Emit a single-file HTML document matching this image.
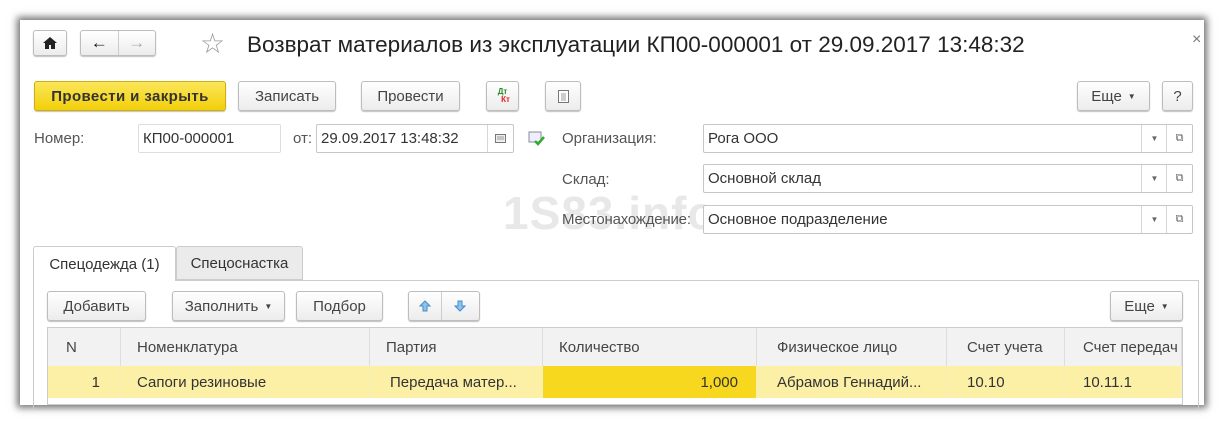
<!DOCTYPE html>
<html><head><meta charset="utf-8"><style>
body{margin:0;width:1224px;height:425px;background:#fff;position:relative;overflow:hidden;font-family:"Liberation Sans",Arial,sans-serif;font-size:15px;color:#333}
.win{position:absolute;left:20px;top:20px;width:1184px;height:385px;background:#fff;box-shadow:0 0 7px 3px rgba(0,0,0,.55)}
.a{position:absolute}
.btn{position:absolute;box-sizing:border-box;border:1px solid #bdbdbd;border-radius:3px;background:linear-gradient(#fff,#ececec);box-shadow:0 1px 1px rgba(0,0,0,.25);display:flex;align-items:center;justify-content:center;color:#444;font-size:15px}
.fld{position:absolute;box-sizing:border-box;border:1px solid #c6c6c6;border-radius:2px;background:#fff;padding-left:4px;display:flex;align-items:center;color:#333;font-size:15px}
.lbl{position:absolute;color:#555;font-size:15px}
.dd{position:absolute;top:0;bottom:0;border-left:1px solid #d6d6d6;display:flex;align-items:center;justify-content:center;font-size:8px;color:#666}
.th{position:absolute;top:328px;height:38px;box-sizing:border-box;border-right:1px solid #ddd;background:#f2f2f2;display:flex;align-items:center;padding-left:16px;color:#444}
.td{position:absolute;top:366px;height:32px;box-sizing:border-box;border-right:1px solid #f5eec0;background:#fbf0a6;display:flex;align-items:center;padding-left:16px;color:#333}
</style></head><body>
<div class="win"></div>
<div class="btn" style="left:33px;top:30px;width:34px;height:26px"><svg width="14" height="12" viewBox="0 0 14 12"><path d="M7 0L0 6h2v6h4V8h2v4h4V6h2z" fill="#222"/></svg></div>
<div class="btn" style="left:80px;top:30px;width:76px;height:26px;justify-content:flex-start">
<span style="width:37px;text-align:center;font-size:17px;color:#111;font-weight:bold">&#8592;</span><span style="width:1px;height:24px;background:#ccc"></span><span style="width:37px;text-align:center;font-size:17px;color:#aaa;font-weight:bold">&#8594;</span></div>
<div class="a" style="left:200px;top:27px;font-size:28px;color:#999">&#9734;</div>
<div class="a" style="left:247px;top:32px;font-size:22.5px;color:#222">Возврат материалов из эксплуатации КП00-000001 от 29.09.2017 13:48:32</div>
<div class="a" style="left:1192px;top:31px;font-size:16px;color:#777">&#215;</div>

<div class="btn" style="left:34px;top:81px;width:192px;height:30px;background:linear-gradient(#fbe65a,#f2cf0a);border-color:#cfae10;color:#333;font-weight:bold;letter-spacing:.4px">Провести и закрыть</div>
<div class="btn" style="left:238px;top:81px;width:98px;height:30px">Записать</div>
<div class="btn" style="left:361px;top:81px;width:99px;height:30px">Провести</div>
<div class="btn" style="left:486px;top:81px;width:33px;height:30px;flex-direction:column;font-size:8px;font-weight:bold;line-height:8px"><span style="color:#2a8a2a">Дт</span><span style="color:#d22;margin-left:6px">Кт</span></div>
<div class="btn" style="left:545px;top:81px;width:36px;height:30px"><svg width="11" height="13"><rect x=".5" y=".5" width="10" height="12" fill="#fff" stroke="#777"/><path d="M3 4h5M3 6h5M3 8h5M3 10h5" stroke="#999"/></svg></div>
<div class="btn" style="left:1077px;top:81px;width:73px;height:30px">Еще <span style="font-size:8px;margin-left:6px">&#9660;</span></div>
<div class="btn" style="left:1162px;top:81px;width:31px;height:30px">?</div>

<div class="lbl" style="left:34px;top:130px">Номер:</div>
<div class="fld" style="left:138px;top:124px;width:143px;height:29px;border-color:#ddd">КП00-000001</div>
<div class="lbl" style="left:293px;top:130px">от:</div>
<div class="fld" style="left:316px;top:124px;width:198px;height:29px">29.09.2017 13:48:32<div class="dd" style="right:0;width:25px"><svg width="11" height="9"><rect x=".5" y=".5" width="10" height="8" fill="#eee" stroke="#777"/><path d="M2 3h7M2 5h7" stroke="#999"/></svg></div></div>
<div class="a" style="left:528px;top:131px"><svg width="18" height="16"><rect x="1" y="1" width="12" height="10" fill="#eef" stroke="#889"/><path d="M7 10l3 3 6-7" stroke="#3a3" stroke-width="2.5" fill="none"/></svg></div>
<div class="a" style="left:503px;top:186px;font-size:46px;font-weight:bold;color:#e8e8e8;letter-spacing:1px">1S83.info</div>
<div class="lbl" style="left:562px;top:130px">Организация:</div>
<div class="fld" style="left:703px;top:124px;width:490px;height:29px">Рога ООО<div class="dd" style="right:25px;width:25px">&#9660;</div><div class="dd" style="right:0;width:25px;font-size:11px">&#10697;</div></div>
<div class="lbl" style="left:562px;top:171px">Склад:</div>
<div class="fld" style="left:703px;top:164px;width:490px;height:29px">Основной склад<div class="dd" style="right:25px;width:25px">&#9660;</div><div class="dd" style="right:0;width:25px;font-size:11px">&#10697;</div></div>
<div class="lbl" style="left:562px;top:211px;letter-spacing:-.2px">Местонахождение:</div>
<div class="fld" style="left:703px;top:205px;width:490px;height:29px">Основное подразделение<div class="dd" style="right:25px;width:25px">&#9660;</div><div class="dd" style="right:0;width:25px;font-size:11px">&#10697;</div></div>

<div class="a" style="left:33px;top:280px;width:1166px;height:130px;border:1px solid #ccc;box-sizing:border-box"></div>
<div class="a" style="left:33px;top:246px;width:143px;height:35px;box-sizing:border-box;border:1px solid #ccc;border-bottom:none;background:#fff;border-radius:3px 3px 0 0;display:flex;align-items:center;justify-content:center;color:#333">Спецодежда (1)</div>
<div class="a" style="left:176px;top:246px;width:127px;height:34px;box-sizing:border-box;border:1px solid #ccc;background:#ebebeb;border-radius:3px 3px 0 0;display:flex;align-items:center;justify-content:center;color:#333">Спецоснастка</div>

<div class="btn" style="left:47px;top:291px;width:99px;height:30px">Добавить</div>
<div class="btn" style="left:172px;top:291px;width:113px;height:30px">Заполнить <span style="font-size:8px;margin-left:6px">&#9660;</span></div>
<div class="btn" style="left:296px;top:291px;width:87px;height:30px">Подбор</div>
<div class="btn" style="left:408px;top:291px;width:72px;height:30px;justify-content:flex-start">
<span style="width:32px;display:flex;justify-content:center"><svg width="12" height="12"><path d="M6 1L1 6h3v5h4V6h3z" fill="#8cc4ee" stroke="#4a8ac8"/></svg></span><span style="width:1px;height:28px;background:#ccc"></span><span style="width:38px;display:flex;justify-content:center"><svg width="12" height="12"><path d="M6 11L1 6h3V1h4v5h3z" fill="#8cc4ee" stroke="#4a8ac8"/></svg></span></div>
<div class="btn" style="left:1110px;top:291px;width:73px;height:30px">Еще <span style="font-size:8px;margin-left:6px">&#9660;</span></div>

<div class="a" style="left:47px;top:327px;width:1136px;height:78px;border:1px solid #ccc;box-sizing:border-box"></div>
<div class="th" style="left:48px;width:73px;padding-left:18px">N</div>
<div class="th" style="left:121px;width:249px">Номенклатура</div>
<div class="th" style="left:370px;width:173px">Партия</div>
<div class="th" style="left:543px;width:214px">Количество</div>
<div class="th" style="left:757px;width:190px;padding-left:20px">Физическое лицо</div>
<div class="th" style="left:947px;width:118px;padding-left:20px">Счет учета</div>
<div class="th" style="left:1065px;width:117px;padding-left:18px;white-space:nowrap;overflow:hidden">Счет передач</div>
<div class="td" style="left:48px;width:73px;justify-content:flex-end;padding-right:20px">1</div>
<div class="td" style="left:121px;width:249px">Сапоги резиновые</div>
<div class="td" style="left:370px;width:173px;padding-left:20px">Передача матер...</div>
<div class="td" style="left:543px;width:214px;background:#f8d81e;justify-content:flex-end;padding-right:18px">1,000</div>
<div class="td" style="left:757px;width:190px;padding-left:20px">Абрамов Геннадий...</div>
<div class="td" style="left:947px;width:118px;padding-left:20px">10.10</div>
<div class="td" style="left:1065px;width:117px;padding-left:18px">10.11.1</div>
</body></html>
